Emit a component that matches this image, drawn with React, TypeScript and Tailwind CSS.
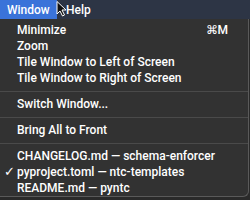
import React from 'react';

const Item: React.FC<{ label: string; shortcut?: string; checked?: boolean }> = ({ label, shortcut, checked }) => (
  <div className="flex items-center h-4 pl-[17px] pr-[20px] relative">
    {checked && <span className="absolute left-[4px] text-[13px]">✓</span>}
    <span className="flex-1 whitespace-nowrap">{label}</span>
    {shortcut && <span>{shortcut}</span>}
  </div>
);

const Sep: React.FC = () => (
  <div className="h-[10px] flex items-center">
    <div className="h-px w-full bg-[#4a4a4a]" />
  </div>
);

export default function App() {
  return (
    <div className="w-[250px] h-[200px] bg-[#2a2a2a] overflow-hidden text-white text-[12px] font-['Roboto',sans-serif] font-medium relative">
      <div className="h-[19px] bg-[#2d3545] flex items-center">
        <div className="h-full bg-[#3a73d9] flex items-center pl-[7px] w-[57px]">Window</div>
        <div className="pl-[9px]">Help</div>
      </div>
      <svg className="absolute left-[56px] top-[1px]" width="11" height="16" viewBox="0 0 11 16">
        <path d="M1 0.5 L1 13 L4 10 L6.5 15 L8.5 14 L6 9 L10 9 Z" fill="#111" stroke="#fff" strokeWidth="1" />
      </svg>
      <div className="bg-[#323232] border-r border-b border-[#5a5a5a] rounded-br-[6px] w-[249px] h-[178px] pt-[3px] leading-4">
        <Item label="Minimize" shortcut="⌘M" />
        <Item label="Zoom" />
        <Item label="Tile Window to Left of Screen" />
        <Item label="Tile Window to Right of Screen" />
        <Sep />
        <Item label="Switch Window..." />
        <Sep />
        <Item label="Bring All to Front" />
        <Sep />
        <Item label="CHANGELOG.md — schema-enforcer" />
        <Item label="pyproject.toml — ntc-templates" checked />
        <Item label="README.md — pyntc" />
      </div>
    </div>
  );
}
